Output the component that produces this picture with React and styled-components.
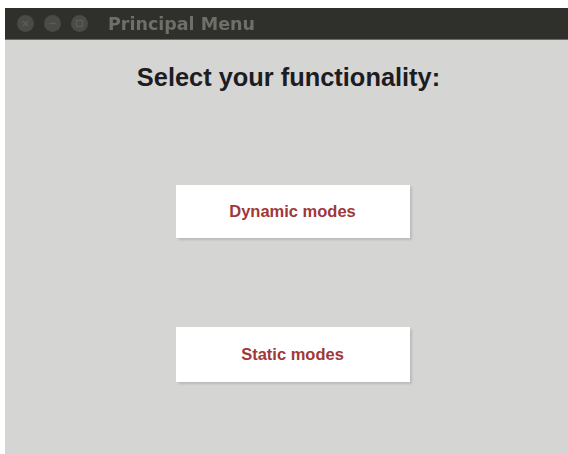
import React from 'react';
import styled, { createGlobalStyle } from 'styled-components';

const GlobalStyle = createGlobalStyle`
	html, body {
		margin: 0;
		padding: 0;
		background: #fff;
	}
`;

const Screen = styled.div`
	width: 568px;
	height: 454px;
	padding: 8px 0 0 5px;
	box-sizing: border-box;
	display: flex;
	flex-direction: column;
`;

const Window = styled.div`
	flex: 1;
	display: flex;
	flex-direction: column;
	background: #d5d5d3;
`;

const TitleBar = styled.div`
	height: 31px;
	display: flex;
	align-items: center;
	padding-left: 12px;
	background: #2f2f2b;
	border-bottom: 1px solid #6a6a66;
`;

const Controls = styled.div`
	display: flex;
	gap: 10px;
	margin-right: 20px;
`;

const Control = styled.span`
	width: 17px;
	height: 17px;
	border-radius: 50%;
	background: #4a4a46;
	display: flex;
	align-items: center;
	justify-content: center;
	filter: blur(0.6px);
`;

const Title = styled.span`
	font-family: "DejaVu Sans", sans-serif;
	font-weight: bold;
	font-size: 17.5px;
	color: #6f6f69;
	filter: blur(0.4px);
`;

const Content = styled.div`
	flex: 1;
	display: flex;
	flex-direction: column;
	align-items: center;
`;

const Heading = styled.h1`
	margin: 23px 0 0 4px;
	font-family: "Liberation Sans", Arial, sans-serif;
	font-weight: bold;
	font-size: 25.4px;
	color: #1c1c22;
`;

const Buttons = styled.div`
	margin-top: 93px;
	display: flex;
	flex-direction: column;
	gap: 89px;
	margin-left: 12px;
`;

const ModeButton = styled.button`
	width: 234px;
	height: ${props => props.tall ? 55 : 53}px;
	border: none;
	background: #fff;
	box-shadow: 2px 2px 2px rgba(0, 0, 0, 0.12);
	font-family: "Liberation Sans", Arial, sans-serif;
	font-weight: bold;
	font-size: 16.5px;
	color: #a0383a;
	cursor: pointer;
`;

const Glyph = ({ kind }) => (
	<svg width="11" height="11" viewBox="0 0 11 11">
		{kind === 'close' && (
			<path d="M3 3 L8 8 M8 3 L3 8" stroke="#5c5c58" strokeWidth="1.4" />
		)}
		{kind === 'min' && (
			<path d="M2.5 5.5 H8.5" stroke="#5c5c58" strokeWidth="1.4" />
		)}
		{kind === 'max' && (
			<rect x="2.5" y="2.5" width="6" height="6" fill="none" stroke="#5c5c58" strokeWidth="1.2" />
		)}
	</svg>
);

export default function App() {
	return (
		<Screen>
			<GlobalStyle />
			<Window>
				<TitleBar>
					<Controls>
						<Control><Glyph kind="close" /></Control>
						<Control><Glyph kind="min" /></Control>
						<Control><Glyph kind="max" /></Control>
					</Controls>
					<Title>Principal Menu</Title>
				</TitleBar>
				<Content>
					<Heading>Select your functionality:</Heading>
					<Buttons>
						<ModeButton>Dynamic modes</ModeButton>
						<ModeButton tall>Static modes</ModeButton>
					</Buttons>
				</Content>
			</Window>
		</Screen>
	);
}
